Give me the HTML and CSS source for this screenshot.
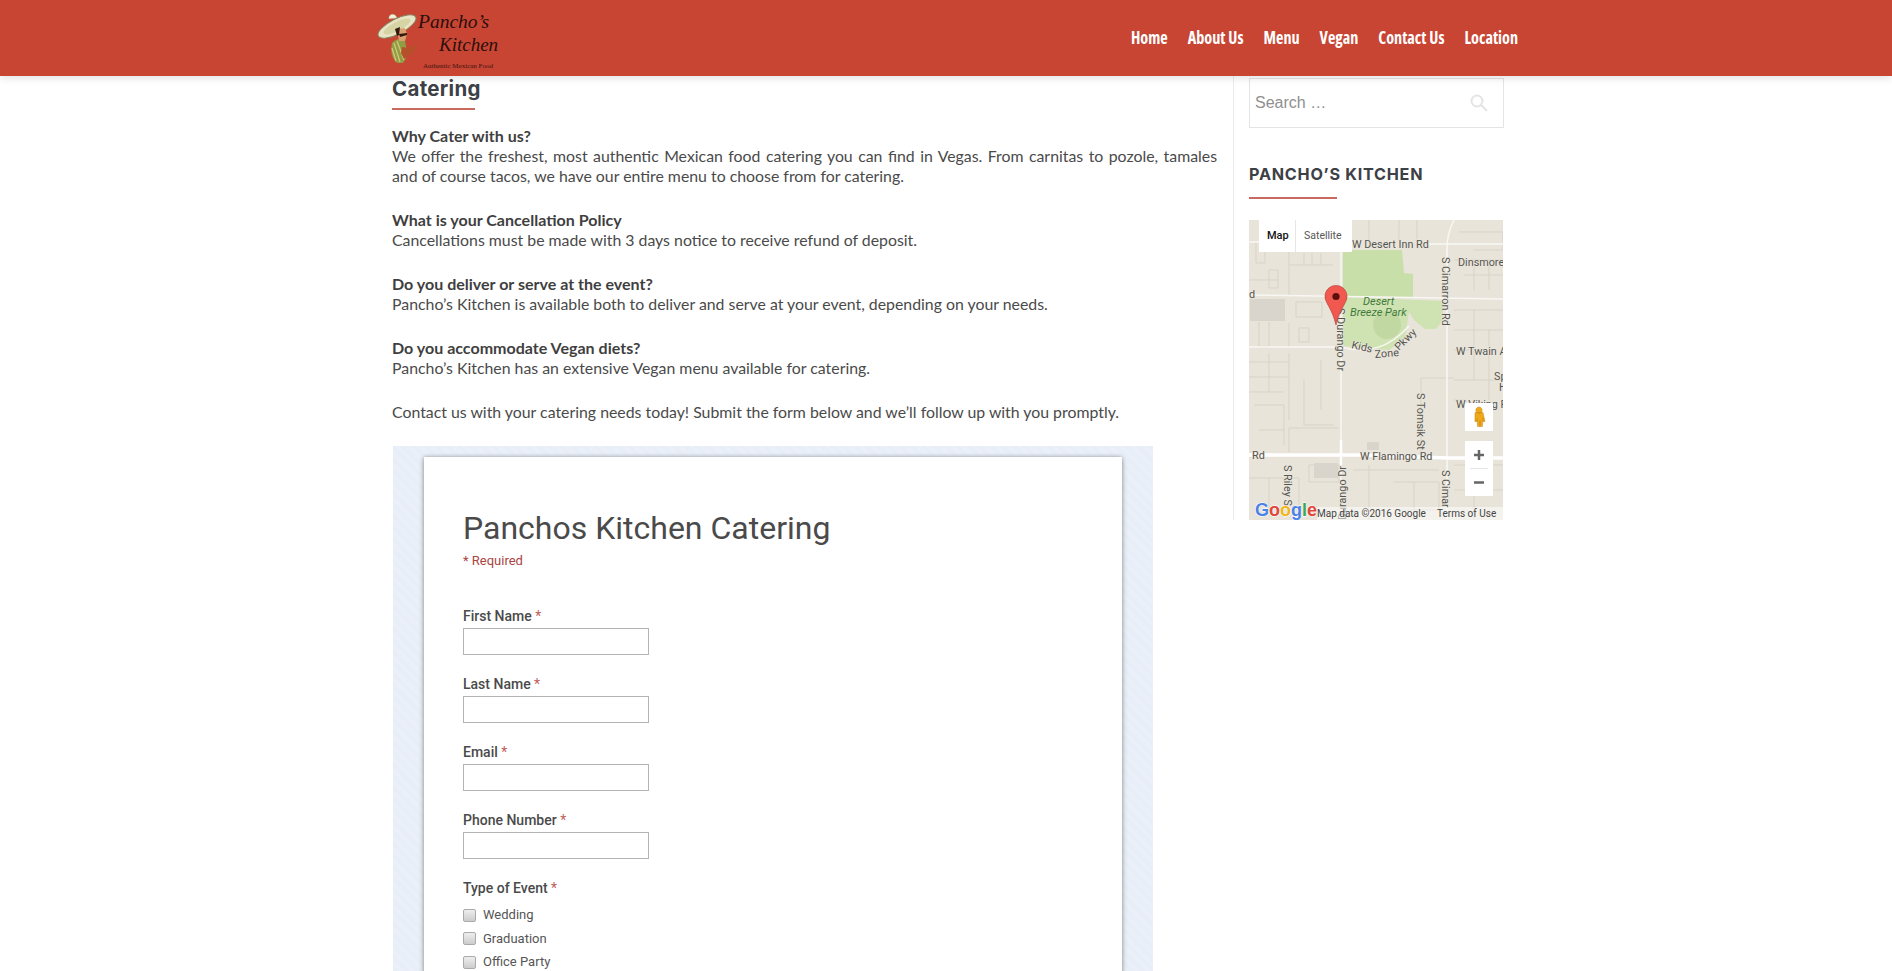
FILE: index.html
```html
<!DOCTYPE html>
<html lang="en">
<head>
<meta charset="utf-8">
<title>Catering – Pancho's Kitchen</title>
<link rel="stylesheet" href="styles.css">
</head>
<body>
<header class="site-header">
  <div class="header-inner">
    <svg class="logo" viewBox="0 0 125 70" width="125" height="70" aria-label="Pancho's Kitchen">
      <ellipse class="hat-brim" cx="21" cy="21.500" rx="21" ry="7.500" transform="rotate(-27 21 21.500)"/>
      <ellipse class="hat-inner" cx="21" cy="21.500" rx="15" ry="4.500" transform="rotate(-27 21 21.500)"/>
      <path class="hat-top" d="M13 14 C12 9 18 8 20 11 L21 13 Z"/>
      <path class="poncho" d="M16 38 C20 33 26 33 29 36 L31 46 L30 53 L27 58 L21 58 C16 54 14 46 16 38Z"/>
      <path class="stripe" d="M18 38 L24 57 M21 36 L28 55 M16 43 L20 56"/>
      <path class="arm" d="M26 42 L32 43 L37 41 L45 39 L39 42 L38 47 L32 51 L28 54 L25 48Z"/>
      <path class="face" d="M21 24 L29 23 L31 29 L29 36 L23 36 Z"/>
      <path class="hair" d="M19 24 L24 22 L23 30 L21 31ZM23 29 L31 28 L31 30 L24 32Z"/>
      <text class="logo-script" x="42" y="23">Pancho’s</text>
      <text class="logo-script kitchen" x="63" y="46">Kitchen</text>
      <text class="logo-tag" x="47" y="63">Authentic Mexican Food</text>
    </svg>
    <nav class="main-nav">
      <a href="#">Home</a>
      <a href="#">About Us</a>
      <a href="#">Menu</a>
      <a href="#">Vegan</a>
      <a href="#">Contact Us</a>
      <a href="#">Location</a>
    </nav>
  </div>
</header>

<div class="page">
  <main class="content">
    <h1 class="entry-title">Catering</h1>
    <p><strong>Why Cater with us?</strong><br>
    <span class="just">We offer the freshest, most authentic Mexican food catering you can find in Vegas. From carnitas to pozole, tamales and of course tacos, we have our entire menu to choose from for catering.</span></p>
    <p><strong>What is your Cancellation Policy</strong><br>Cancellations must be made with 3 days notice to receive refund of deposit.</p>
    <p><strong>Do you deliver or serve at the event?</strong><br>Pancho’s Kitchen is available both to deliver and serve at your event, depending on your needs.</p>
    <p><strong>Do you accommodate Vegan diets?</strong><br>Pancho’s Kitchen has an extensive Vegan menu available for catering.</p>
    <p>Contact us with your catering needs today! Submit the form below and we’ll follow up with you promptly.</p>

    <section class="form-panel">
      <form class="form-card">
        <h2 class="form-title">Panchos Kitchen Catering</h2>
        <div class="form-required">* Required</div>
        <div class="field">
          <label class="field-label">First Name <span class="star">*</span></label>
          <input class="field-input" type="text">
        </div>
        <div class="field">
          <label class="field-label">Last Name <span class="star">*</span></label>
          <input class="field-input" type="text">
        </div>
        <div class="field">
          <label class="field-label">Email <span class="star">*</span></label>
          <input class="field-input" type="text">
        </div>
        <div class="field">
          <label class="field-label">Phone Number <span class="star">*</span></label>
          <input class="field-input" type="text">
        </div>
        <div class="field">
          <label class="field-label">Type of Event <span class="star">*</span></label>
          <div class="checks">
            <div class="check"><span class="box"></span>Wedding</div>
            <div class="check"><span class="box"></span>Graduation</div>
            <div class="check"><span class="box"></span>Office Party</div>
          </div>
        </div>
      </form>
    </section>
  </main>

  <aside class="sidebar">
    <div class="search-box">
      <span class="search-text">Search …</span>
      <svg class="search-icon" viewBox="0 0 18 18" width="18" height="18"><circle cx="7" cy="7" r="5.500"/><path d="M11 11 L17 17"/></svg>
    </div>
    <h3 class="widget-title">PANCHO’S KITCHEN</h3>
    <svg class="map" viewBox="0 0 254 300" width="254" height="300">
      <rect class="m-bg" width="254" height="300"/>
      <g class="m-minor">
        <path d="M7 22V43H16V22M20 50H29V68H20ZM40 22V75M55 33V45M63 33V45M72 33V45M40 45H84"/>
        <path d="M47 82H73V97H47ZM10 102V127H20V102M40 103V127M50 108H60V122H50ZM0 60H30"/>
        <path d="M0 142H40M0 157H40M0 172H35M20 133V172M40 133V200M55 160V205H85M72 140V190"/>
        <path d="M40 208H90M40 208V232M10 210H35M5 185H35V225"/>
        <path d="M0 258H50V300M20 258V290M60 245H90V262H60Z"/>
        <path d="M104 250H190M120 245V300M145 262H190V290H145M165 262V300"/>
        <path d="M172 158H205M172 158V235"/>
        <path d="M205 40H254M210 12H254V30H225M225 40V70M240 40V70M215 55H254"/>
        <path d="M205 90H254M205 110H254M225 90V160M240 110V180M205 130H220M205 160H254M205 180H218"/>
        <path d="M205 245H254M225 245V300M205 270H254"/>
        <path d="M120 0V20M150 0V20M168 0V20"/>
      </g>
      <rect class="m-block" x="1" y="79" width="35" height="22"/>
      <rect class="m-block" x="65" y="243" width="24" height="15"/>
      <rect class="m-block" x="118" y="222" width="12" height="8"/>
      <path class="m-park" d="M94 30 L153 30 L155 53 L164 54 L164 77 L94 77Z"/>
      <path class="m-park-low" d="M94 77 L194 81 L194 100 L187 109 L176 109 L165 100 L160 92 L156 118 L140 130 L116 128 L94 126Z"/>
      <circle class="m-park-dark" cx="138" cy="105" r="14"/>
      <g class="m-road">
        <path d="M0 22H105M180 24H254"/>
        <path d="M0 75L254 79"/>
        <path d="M0 127H90C120 134 140 128 160 106"/>
        <path d="M92 0V300"/>
        <path d="M198 300V28C198 16 201 8 205 0"/>
      </g>
      <path class="m-major" d="M0 235H70L110 235L200 238H254"/>
      <path class="m-major-v" d="M92 220V245"/>
      <g class="m-label">
        <text x="103" y="28">W Desert Inn Rd</text>
        <text x="209" y="46">Dinsmore</text>
        <text x="207" y="135">W Twain A</text>
        <text x="245" y="160">Sp</text>
        <text x="250" y="171">H</text>
        <text x="207" y="188">W Viking R</text>
        <text x="111" y="240">W Flamingo Rd</text>
        <text x="3" y="239">Rd</text>
        <text x="0" y="78">d</text>
        <text transform="translate(193 37) rotate(90)">S Cimarron Rd</text>
        <text transform="translate(88 88) rotate(90)">S Durango Dr</text>
        <text transform="translate(97 300) rotate(-90)">Durango Dr</text>
        <text transform="translate(168 173) rotate(90)">S Tomsik St</text>
        <text transform="translate(35 245) rotate(90)">S Riley S</text>
        <text transform="translate(193 250) rotate(90)">S Cimar</text>
        <text transform="translate(102 128) rotate(13)">Kids</text>
        <text transform="translate(126 138) rotate(-5)">Zone</text>
        <text transform="translate(150 131) rotate(-45)">Pkwy</text>
      </g>
      <g class="m-park-label">
        <text x="114" y="85">Desert</text>
        <text x="101" y="96">Breeze Park</text>
      </g>
      <path class="m-pin" d="M87 65.500 C94 65.500 98 71 98 76.500 C98 83 91 88 87 105 C83 88 76 83 76 76.500 C76 71 80 65.500 87 65.500Z"/>
      <circle class="m-pin-dot" cx="87" cy="76.500" r="3.600"/>
      <rect class="m-ctl" x="10" y="0" width="93" height="32" rx="1"/>
      <path class="m-sep" d="M46.500 0V32"/>
      <text class="m-map-on" x="18" y="19">Map</text>
      <text class="m-map-off" x="55" y="19">Satellite</text>
      <rect class="m-ctl" x="216" y="183" width="28" height="28" rx="1"/>
      <path class="m-peg" d="M230 187a3.200 3.200 0 1 1 -.01 0ZM226 192.500h8l2 9h-2v-3l-.6 8h-2.400v-6h-.1v6h-2.400l-.6-8v3h-2z"/>
      <rect class="m-ctl" x="216" y="221" width="28" height="55" rx="1"/>
      <path class="m-sep" d="M221 248.500H239"/>
      <path class="m-zoom" d="M225 235H235M230 230V240M225 262.500H235"/>
      <rect class="m-attr-bg" x="68" y="287" width="186" height="13"/>
      <text class="m-logo" x="6" y="296"><tspan class="g-b">G</tspan><tspan class="g-r">o</tspan><tspan class="g-y">o</tspan><tspan class="g-b">g</tspan><tspan class="g-g">l</tspan><tspan class="g-r">e</tspan></text>
      <text class="m-attr" x="68" y="297">Map data ©2016 Google</text>
      <text class="m-attr" x="188" y="297">Terms of Use</text>
    </svg>
  </aside>
</div>
</body>
</html>
```

FILE: styles.css
```css
html, body { margin: 0; padding: 0; height: 971px; overflow: hidden; background: #fff; }
body { font-family: "Lato", "Liberation Sans", sans-serif; font-size: 15.850px; line-height: 20px; color: #4a4a4a; }

.site-header { height: 76px; background: #c94533; box-shadow: 0 2px 8px rgba(0,0,0,.12); position: relative; z-index: 2; }
.header-inner { width: 1142px; margin-left: 376px; height: 76px; display: flex; justify-content: space-between; align-items: flex-start; }
.logo { margin-top: 5px; display: block; overflow: visible; }
.logo-script { font-family: "Liberation Serif", serif; font-style: italic; font-size: 19.500px; fill: #2a0f0c; }
.kitchen { font-size: 19px; }
.logo-tag { font-family: "Liberation Serif", serif; font-size: 7px; fill: #3a1410; }
.hat-brim { fill: #e8e4c6; stroke: #8a7f5a; stroke-width: 1; }
.hat-inner { fill: #d6d4a4; }
.hat-top { fill: #f4f0dc; stroke: #a59a70; stroke-width: .5; }
.face { fill: #d8a070; }
.hair { fill: #33180f; }
.poncho { fill: #8f9e45; }
.stripe { fill: none; stroke: #d6c87a; stroke-width: 1.200; }
.arm { fill: #b5512a; }

.main-nav { display: flex; gap: 20px; margin-top: 25px; }
.main-nav a { font-family: "Open Sans", "Liberation Sans", sans-serif; font-stretch: 75%; font-weight: 700; font-size: 16.200px; line-height: 24px; color: #fff; text-decoration: none; white-space: nowrap; transform: scaleY(1.130); }

.page { display: flex; align-items: flex-start; margin-left: 392px; }
.content { width: 825px; flex: none; }
.entry-title { font-family: "Inter", "Liberation Sans", sans-serif; font-weight: 700; font-size: 20.500px; letter-spacing: .3px; line-height: 24px; color: #3d4045; margin: 1px 0 16px; width: 83px; padding-bottom: 7px; border-bottom: 2px solid #c96a5e; white-space: nowrap; }
.content p { margin: 0 0 24px; }
.content strong { font-weight: 700; font-size: 16.050px; color: #3f3f3f; }
.just { display: block; text-align: justify; }

.form-panel { width: 760px; height: 525px; margin-left: 1px; box-sizing: border-box; padding: 11px 31px 0; background: repeating-linear-gradient(45deg, #e8eef7 0 4px, #ebf0f8 4px 8px); overflow: hidden; }
.form-card { background: #fff; height: 600px; box-sizing: border-box; padding: 55px 39px 0; box-shadow: 0 0 4px rgba(0,0,0,.3), 0 2px 6px rgba(0,0,0,.2); font-family: "Roboto", "Liberation Sans", sans-serif; }
.form-title { font-family: "Roboto", sans-serif; font-weight: 400; font-size: 32px; line-height: 32px; color: #4a4a4a; margin: 0; }
.form-required { font-size: 13px; line-height: 16px; color: #a94442; margin: 9px 0 0; }
.field { margin-top: 21px; }
.form-required + .field { margin-top: 39px; }
.field-label { display: block; font-weight: 500; font-size: 14px; line-height: 16px; color: #4a4a4a; margin-bottom: 4px; }
.star { color: #c0605a; font-weight: 400; }
.field-input { display: block; width: 186px; height: 27px; box-sizing: border-box; border: 1px solid #b4b4b4; background: #fff; padding: 0; margin: 0; outline: 0; border-radius: 0; }
.checks { margin-top: 9px; display: flex; flex-direction: column; gap: 3.500px; }
.check { display: flex; align-items: center; gap: 7px; font-size: 13px; line-height: 20px; color: #555; }
.box { width: 11px; height: 11px; border: 1px solid #aaa; border-radius: 2px; background: linear-gradient(#eee, #ccc); display: block; flex: none; }

.sidebar { width: 255px; height: 444px; flex: none; margin-left: 16px; padding-left: 15px; border-left: 1px solid #ececec; }
.search-box { height: 50px; margin-top: 2px; box-sizing: border-box; border: 1px solid #e4e4e4; display: flex; align-items: center; justify-content: space-between; padding: 0 15px 0 5px; }
.search-text { font-family: "Liberation Sans", Arial, sans-serif; font-size: 16px; color: #8f8f8f; }
.search-icon { fill: none; stroke: #e4e4e4; stroke-width: 2; display: block; }
.widget-title { font-family: "Inter", "Liberation Sans", sans-serif; font-weight: 700; font-size: 16.200px; letter-spacing: .75px; line-height: 20px; color: #3d4045; margin: 36px 0 21px; padding-bottom: 13px; width: 88px; white-space: nowrap; border-bottom: 2px solid #c96a5e; }

.map { display: block; font-family: "Roboto", "Liberation Sans", sans-serif; }
.m-bg { fill: #e8e4da; }
.m-minor path { fill: none; stroke: #d9d3c6; stroke-width: 1; }
.m-block { fill: #d9d5cd; }
.m-park { fill: #c9dfa9; }
.m-park-low { fill: #cfe3b2; }
.m-park-dark { fill: #c2d8a2; }
.m-road path { fill: none; stroke: #f8f7f3; stroke-width: 1.500; }
.m-major { fill: none; stroke: #fff; stroke-width: 3.500; }
.m-major-v { fill: none; stroke: #fff; stroke-width: 2.500; }
.m-label text { font-size: 10.800px; fill: #55554f; stroke: #ece8df; stroke-width: 1px; paint-order: stroke; }
.m-park-label text { font-size: 11px; font-style: italic; fill: #3f7a3a; }
.m-pin { fill: #f1584f; stroke: #b03a30; stroke-width: .6; }
.m-pin-dot { fill: #5a0f0b; }
.m-ctl { fill: #fff; }
.m-sep { fill: none; stroke: #e6e6e6; stroke-width: 1; }
.m-map-on { font-size: 11px; font-weight: 500; fill: #111; }
.m-map-off { font-size: 10.500px; fill: #565656; }
.m-peg { fill: #f0a818; stroke: #b87a10; stroke-width: .4; }
.m-zoom { fill: none; stroke: #666; stroke-width: 2.500; }
.m-attr-bg { fill: #fff; fill-opacity: .5; }
.m-attr { font-size: 10px; fill: #444; }
.m-logo { font-family: "Liberation Sans", sans-serif; font-size: 18px; font-weight: 700; stroke: #fff; stroke-width: 1px; paint-order: stroke; }
.g-b { fill: #4a82e8; }
.g-r { fill: #e0473c; }
.g-y { fill: #f0b71a; }
.g-g { fill: #3ea655; }
```
